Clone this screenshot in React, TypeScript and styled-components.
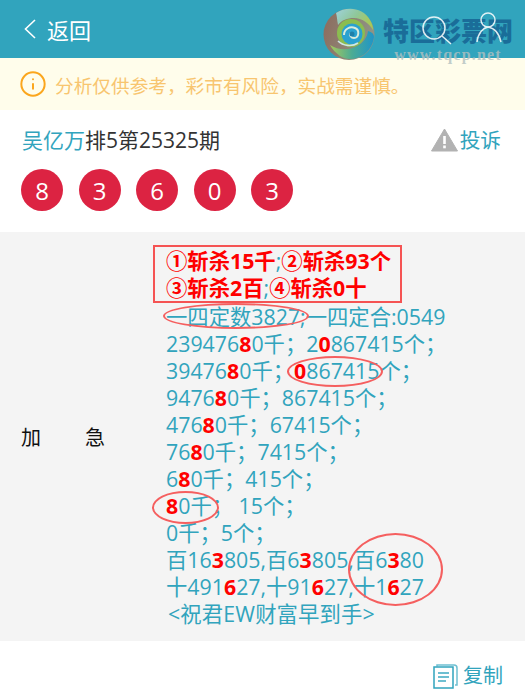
import React from 'react';
import styled, { createGlobalStyle } from 'styled-components';
import { Info } from 'lucide-react';

const GlobalStyle = createGlobalStyle`
  html, body {
    margin: 0;
    padding: 0;
    background: #fff;
    font-family: "Open Sans", "Noto Sans CJK SC", sans-serif;
  }
`;

const teal = '#31a4bd';

const Page = styled.div`
  position: relative;
  width: 525px;
  height: 689px;
  overflow: hidden;
  background: #fff;
`;

const Header = styled.header`
  height: 58px;
  background: ${teal};
  display: flex;
  align-items: center;
  padding: 0 23px;
  color: #fff;
  font-size: 22px;
  gap: 10px;
  box-sizing: border-box;
`;

const HeaderIcons = styled.svg`
  position: absolute;
  left: 412px;
  top: 8px;
`;

const Watermark = styled.div`
  position: absolute;
  left: 323px;
  top: 8px;
  display: flex;
  gap: 8px;
`;

const MarkText = styled.div`
  display: flex;
  flex-direction: column;
  align-items: center;
  padding-top: 8px;
`;

const MarkName = styled.div`
  font-size: 26px;
  line-height: 30px;
  font-weight: 900;
  color: #1a6d99;
`;

const MarkUrl = styled.div`
  font-family: "Liberation Serif", serif;
  font-size: 16px;
  line-height: 17px;
  font-weight: 700;
  letter-spacing: 1.2px;
  color: rgba(178, 192, 192, 0.8);
`;

const Notice = styled.div`
  height: 52px;
  background: #fffdeb;
  display: flex;
  align-items: center;
  gap: 8px;
  padding-left: 19px;
  font-size: 18.67px;
  color: #f8c56f;
`;

const Summary = styled.section`
  height: 122px;
  padding: 15px 24px 0 22px;
  box-sizing: border-box;
`;

const TitleRow = styled.div`
  display: flex;
  align-items: center;
  justify-content: space-between;
  font-size: 21px;
  line-height: 30px;
  color: #333;
`;

const Author = styled.span`
  color: ${teal};
`;

const Complain = styled.span`
  display: flex;
  align-items: center;
  gap: 2px;
  font-size: 20.67px;
  color: ${teal};
`;

const Balls = styled.div`
  display: flex;
  gap: 15.5px;
  margin: 14px 0 0 -1px;
`;

const Ball = styled.span`
  width: 42px;
  height: 42px;
  border-radius: 50%;
  background: #dc2342;
  color: #fff;
  font-size: 24px;
  display: flex;
  align-items: center;
  justify-content: center;
`;

const Detail = styled.section`
  position: relative;
  height: 409px;
  background: #f4f4f4;
  display: flex;
  align-items: center;
  box-sizing: border-box;
`;

const Label = styled.div`
  width: 84px;
  margin-left: 21px;
  display: flex;
  justify-content: space-between;
  font-size: 20px;
  color: #111;
`;

const Content = styled.div`
  margin: -2px 0 0 61px;
  font-size: 21.33px;
  line-height: 27px;
  color: ${teal};
  white-space: nowrap;
`;

const KillBox = styled.div`
  width: 249px;
  box-sizing: border-box;
  margin-left: -13px;
  padding-left: 11px;
  border: 2px solid #f55353;
  color: #f00;
  font-weight: 700;
`;

const Sep = styled.span`
  font-weight: 400;
  color: ${teal};
`;

const Hot = styled.b`
  color: #f00;
  font-weight: 700;
`;

const Wish = styled.div`
  padding-left: 2px;
  letter-spacing: 0.15px;
`;

const Ring = styled.span<{ $x: number; $y: number; $w: number; $h: number }>`
  position: absolute;
  left: ${(p) => p.$x}px;
  top: ${(p) => p.$y}px;
  width: ${(p) => p.$w}px;
  height: ${(p) => p.$h}px;
  box-sizing: border-box;
  border: 2px solid #f55f5f;
  border-radius: 50%;
`;

const Footer = styled.div`
  display: flex;
  justify-content: flex-end;
  align-items: center;
  gap: 5px;
  padding: 21px 22px 0 0;
  font-size: 20px;
  line-height: 27px;
  color: ${teal};
`;

// *x* marks the bold red digit in a line
const lines: string[] = [
  '239476*8*0千；2*0*867415个；',
  '39476*8*0千；*0*867415个；',
  '9476*8*0千；867415个；',
  '476*8*0千；67415个；',
  '76*8*0千；7415个；',
  '6*8*0千；415个；',
  '*8*0千；  15个；',
  '0千；5个；',
  '百16*3*805,百6*3*805,百6*3*80',
  '十491*6*27,十91*6*27,十1*6*27',
];

function Marked({ text }: { text: string }) {
  const parts = text.split('*');
  return (
    <div>
      {parts.map((part, i) =>
        i % 2 === 1 ? <Hot key={i}>{part}</Hot> : <React.Fragment key={i}>{part}</React.Fragment>
      )}
    </div>
  );
}

function Swirl() {
  return (
    <svg width="52" height="53" viewBox="0 0 52 53">
      <defs>
        <linearGradient id="rim" x1="0" y1="0" x2="1" y2="0.3">
          <stop offset="0" stopColor="#8c6a5c" />
          <stop offset="1" stopColor="#8f9384" />
        </linearGradient>
        <linearGradient id="top" x1="0" y1="0" x2="1" y2="0.5">
          <stop offset="0" stopColor="#9fd2dc" />
          <stop offset="0.55" stopColor="#8fc79a" />
          <stop offset="1" stopColor="#a7c858" />
        </linearGradient>
        <linearGradient id="low" x1="0" y1="0" x2="1" y2="0">
          <stop offset="0" stopColor="#a6c95c" />
          <stop offset="0.5" stopColor="#4cab94" />
          <stop offset="1" stopColor="#1f95c8" />
        </linearGradient>
      </defs>
      <circle cx="26" cy="26.5" r="25.5" fill="url(#rim)" />
      <path d="M13 5C23-2 40-1 47 12c2 3 3 7 3 10-4-7-11-12-19-12-7 0-12 2-16 7C14 12 14 8 13 5Z" fill="url(#top)" />
      <path d="M7 37c8 5 18 6 27 1 6-3 10-8 11-15 4 1 6 3 6 6-1 9-7 18-17 21-6 2-13 1-17-2-4-3-8-7-10-11Z" fill="url(#low)" />
      <circle cx="28" cy="25" r="14" fill="#8bbd50" />
      <circle cx="29" cy="26" r="10.5" fill="#2aa2d0" />
      <path d="M21 27c0-6 6-9 11-7 5 2 4 10-1 10-3 0-5-3-3-5" fill="none" stroke="#d9ebdc" strokeWidth="2" />
      <circle cx="29" cy="26" r="2.5" fill="#1f7fa8" />
      <path d="M15 33c5 5 14 6 20 2" fill="none" stroke="#cfe6e6" strokeWidth="1.6" />
    </svg>
  );
}

export default function App() {
  return (
    <Page>
      <GlobalStyle />
      <Header>
        <svg width="14" height="22" viewBox="0 0 14 22">
          <path d="M12 2 2.5 11 12 20" fill="none" stroke="#fff" strokeWidth="1.6" />
        </svg>
        返回
      </Header>
      <Notice>
        <Info size={28} color="#fba61d" strokeWidth={1.7} />
        分析仅供参考，彩市有风险，实战需谨慎。
      </Notice>
      <Summary>
        <TitleRow>
          <span>
            <Author>吴亿万</Author>排5第25325期
          </span>
          <Complain>
            <svg width="27" height="24" viewBox="0 0 27 24">
              <path d="M13.5 1 26.5 23H.5Z" fill="#b2b2b2" stroke="#b2b2b2" strokeLinejoin="round" />
              <rect x="12.2" y="8" width="2.6" height="8" fill="#fff" />
              <rect x="12.2" y="17.5" width="2.6" height="2.8" fill="#fff" />
            </svg>
            投诉
          </Complain>
        </TitleRow>
        <Balls>
          {['8', '3', '6', '0', '3'].map((n, i) => (
            <Ball key={i}>{n}</Ball>
          ))}
        </Balls>
      </Summary>
      <Detail>
        <Label>
          <span>加</span>
          <span>急</span>
        </Label>
        <Content>
          <KillBox>
            <div>
              ①斩杀15千<Sep>;</Sep>②斩杀93个
            </div>
            <div>
              ③斩杀2百<Sep>;</Sep>④斩杀0十
            </div>
          </KillBox>
          <div>一四定数3827;一四定合:0549</div>
          {lines.map((line, i) => (
            <Marked key={i} text={line} />
          ))}
          <Wish>&lt;祝君EW财富早到手&gt;</Wish>
        </Content>
      </Detail>
      <Footer>
        <svg width="25" height="26" viewBox="0 0 25 26" fill="none" stroke={teal} strokeWidth="1.5">
          <path d="M4 3.5V2h17c1.5 0 3 1 3 3v17h-2" opacity="0.7" />
          <path d="M1 4h19v21H1z" />
          <path d="M5 10h11M5 14h11M5 18h8" strokeWidth="2" opacity="0.7" />
        </svg>
        复制
      </Footer>

      <Ring $x={163} $y={303} $w={146} $h={26} />
      <Ring $x={287} $y={356} $w={96} $h={31} />
      <Ring $x={152} $y={491} $w={67} $h={33} />
      <Ring $x={348} $y={533} $w={95} $h={73} />

      <Watermark>
        <Swirl />
        <MarkText>
          <MarkName>特区彩票网</MarkName>
          <MarkUrl>www.tqcp.net</MarkUrl>
        </MarkText>
      </Watermark>
      <HeaderIcons width="100" height="40" viewBox="0 0 100 40" fill="none" stroke="#fff" strokeWidth="1.5" opacity="0.85">
        <circle cx="22" cy="20" r="11" />
        <path d="M30 28 39 36" />
        <circle cx="76" cy="12" r="7" />
        <path d="M65 34c1-9 6-14 11-15 6 1 11 6 13 15" />
      </HeaderIcons>
    </Page>
  );
}
